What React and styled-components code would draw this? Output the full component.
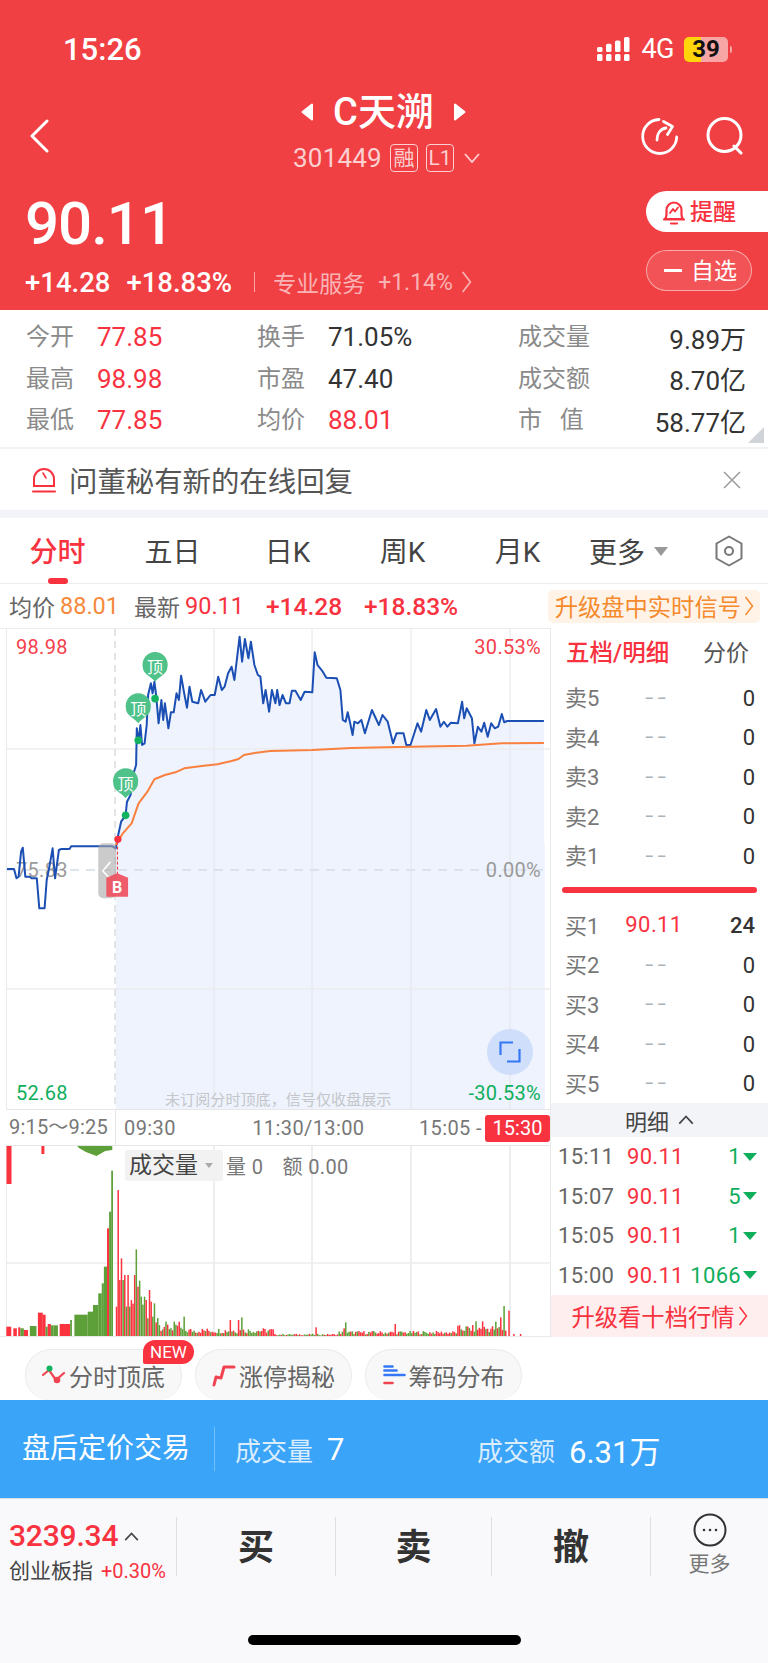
import React from 'react';
import styled, { createGlobalStyle } from 'styled-components';

const RED = '#f8323f';
const GREEN = '#0fae5c';
const FONT = `Roboto, "Noto Sans CJK SC", sans-serif`;

const GlobalStyle = createGlobalStyle`
  html, body {
    margin: 0;
    padding: 0;
    background: #fff;
  }
  body {
    font-family: ${FONT};
  }
`;

const Page = styled.div`
  width: 768px;
  height: 1663px;
  overflow: hidden;
  background: #fff;
  display: flex;
  flex-direction: column;
`;

/* header */
const Header = styled.header`
  height: 310px;
  flex: none;
  background: #f14043;
  color: #fff;
`;

const StatusBar = styled.div`
  height: 82px;
  padding: 8px 40px 0 63px;
  display: flex;
  align-items: center;
  justify-content: space-between;
`;

const Clock = styled.span`
  font-size: 31px;
  font-weight: 500;
`;

const StatusRight = styled.div`
  display: flex;
  align-items: center;
`;

const Network = styled.span`
  font-size: 27px;
  margin: 0 10px 0 11px;
  letter-spacing: -0.5px;
`;

const Battery = styled.div`
  width: 44px;
  height: 25px;
  border-radius: 5px;
  background: linear-gradient(90deg, #ffd60a 0 39%, #f8a5a6 39% 100%);
  color: #111;
  font-size: 24px;
  font-weight: 700;
  line-height: 25px;
  text-align: center;
  position: relative;
  &:after {
    content: '';
    position: absolute;
    right: -4px;
    top: 9px;
    width: 2px;
    height: 7px;
    border-radius: 0 2px 2px 0;
    background: #f8a5a6;
  }
`;

const NavRow = styled.div`
  height: 92px;
  padding: 0 24px 0 29px;
  display: grid;
  grid-template-columns: 1fr auto 1fr;
  align-items: center;
`;

const NavIcons = styled.div`
  display: flex;
  justify-content: flex-end;
  gap: 27px;
`;

const TitleStack = styled.div`
  display: flex;
  flex-direction: column;
  align-items: center;
`;

const TitleLine = styled.div`
  height: 44px;
  display: flex;
  align-items: center;
  gap: 19px;
  padding-right: 6px;
`;

const Title = styled.span`
  font-size: 38px;
  line-height: 44px;
  font-weight: 500;
`;

const CodeLine = styled.div`
  height: 48px;
  display: flex;
  align-items: center;
  color: #fbd0d1;
`;

const Code = styled.span`
  font-size: 26px;
  letter-spacing: 0.2px;
  margin-right: 8px;
`;

const Tag = styled.span`
  height: 28px;
  min-width: 28px;
  box-sizing: border-box;
  border: 1px solid #fbd0d1;
  border-radius: 4px;
  font-size: 21px;
  line-height: 26px;
  text-align: center;
  margin-right: 8px;
  padding: 0 1px;
`;

const QuoteRow = styled.div`
  height: 128px;
  display: flex;
  justify-content: space-between;
`;

const QuoteLeft = styled.div`
  padding: 10px 0 0 25px;
`;

const Price = styled.div`
  font-size: 60px;
  line-height: 64px;
  font-weight: 500;
  letter-spacing: -1px;
`;

const ChangeRow = styled.div`
  margin-top: 8px;
  height: 36px;
  display: flex;
  align-items: center;
`;

const Change = styled.span`
  font-size: 27.5px;
  font-weight: 500;
  margin-right: ${p => p.$gap || 0}px;
`;

const Service = styled.span`
  border-left: 1px solid #f9a6a8;
  margin-left: 22px;
  padding-left: 18px;
  height: 20px;
  display: flex;
  align-items: center;
  font-size: 23px;
  color: #f9b3b5;
  gap: 13px;
`;

const ServiceArrow = styled.span`
  margin-left: 8px;
  display: flex;
`;

const QuoteRight = styled.div`
  padding-top: 9px;
  width: 122px;
`;

const RemindButton = styled.div`
  height: 41px;
  box-sizing: border-box;
  background: #fff;
  border-radius: 21px 0 0 21px;
  color: ${RED};
  font-size: 23px;
  font-weight: 500;
  display: flex;
  align-items: center;
  padding: 0 0 3px 16px;
  gap: 4px;
`;

const WatchButton = styled.div`
  margin-top: 18px;
  width: 106px;
  height: 41px;
  box-sizing: border-box;
  border: 1px solid rgba(255, 255, 255, 0.5);
  border-radius: 21px;
  background: rgba(255, 255, 255, 0.1);
  font-size: 23px;
  display: flex;
  align-items: center;
  padding: 0 0 3px 17px;
  gap: 9px;
  &:before {
    content: '';
    width: 18px;
    height: 3px;
    margin-top: 3px;
    background: #fff;
  }
`;

/* stats */
const Stats = styled.section`
  height: 137px;
  flex: none;
  box-sizing: border-box;
  padding: 6px 22px 0 26px;
  display: grid;
  grid-template-columns: 231px 261px 1fr;
  grid-auto-rows: 41.5px;
  position: relative;
  &:after {
    content: '';
    position: absolute;
    right: 4px;
    bottom: 4px;
    border-style: solid;
    border-width: 0 0 16px 16px;
    border-color: transparent transparent #d0d3d8 transparent;
  }
`;

const StatCell = styled.div`
  display: flex;
  align-items: center;
  justify-content: ${p => (p.$wide ? 'space-between' : 'flex-start')};
`;

const StatLabel = styled.span`
  font-size: 24px;
  color: #8a8a8a;
  width: ${p => (p.$wide ? 'auto' : '71px')};
  padding-bottom: 4px;
  white-space: pre;
`;

const StatValue = styled.span`
  font-size: 26px;
  padding-top: 1px;
  color: ${p => (p.$red ? RED : '#333')};
`;

const Banner = styled.div`
  height: 61px;
  flex: none;
  box-sizing: content-box;
  border-top: 2px solid #f1f2f4;
  padding: 0 27px 3px 32px;
  margin-bottom: -3px;
  display: flex;
  align-items: center;
  color: #555;
  font-size: 28.4px;
  gap: 13px;
`;

const BannerClose = styled.span`
  margin-left: auto;
  display: flex;
`;

const Gap = styled.div`
  height: 8px;
  flex: none;
  background: #f3f4f7;
`;

/* tabs */
const Tabs = styled.nav`
  height: 66px;
  flex: none;
  border-bottom: 1px solid #ececec;
  box-sizing: border-box;
  display: grid;
  grid-template-columns: repeat(6, 115px) 1fr;
  align-items: center;
`;

const Tab = styled.div`
  height: 66px;
  line-height: 69px;
  text-align: center;
  font-size: 28px;
  color: ${p => (p.$active ? RED : '#444')};
  font-weight: ${p => (p.$active ? 500 : 400)};
  position: relative;
  &:after {
    content: '';
    display: ${p => (p.$active ? 'block' : 'none')};
    position: absolute;
    left: 48px;
    bottom: 0;
    width: 20px;
    height: 6px;
    border-radius: 3px;
    background: ${RED};
  }
`;

const MoreTab = styled.div`
  font-size: 28px;
  color: #444;
  display: flex;
  align-items: center;
  gap: 9px;
  padding-left: 14px;
  &:after {
    content: '';
    border-style: solid;
    border-width: 9px 7px 0 7px;
    border-color: #999 transparent transparent transparent;
  }
`;

const SettingTab = styled.div`
  display: flex;
  justify-content: center;
`;

const InfoRow = styled.div`
  height: 44px;
  flex: none;
  padding: 0 8px 0 9px;
  display: flex;
  align-items: center;
  font-size: 23px;
  box-sizing: border-box;
`;

const InfoPair = styled.span`
  width: ${p => p.$w}px;
  flex: none;
  display: flex;
  align-items: center;
  gap: 5px;
  white-space: nowrap;
  color: #666;
`;

const InfoNum = styled.span`
  color: ${p => p.$color};
  font-size: ${p => (p.$bold ? 24.5 : 23.5)}px;
  font-weight: ${p => (p.$bold ? 500 : 400)};
`;

const UpgradePill = styled.span`
  margin-left: auto;
  height: 33px;
  padding: 0 6px 0 7px;
  font-size: 23.3px;
  color: #f58a2d;
  background: #fff3e8;
  border-radius: 5px;
  white-space: nowrap;
  display: flex;
  align-items: center;
  gap: 3px;
`;

/* chart area */
const Market = styled.section`
  height: 709px;
  flex: none;
  display: flex;
`;

const ChartColumn = styled.div`
  width: 551px;
  flex: none;
  box-sizing: border-box;
  padding-left: 6px;
  border-right: 1px solid #e8e9ec;
  border-bottom: 1px solid #e8e9ec;
  border-top: 1px solid #ececec;
`;

const PriceChart = styled.div`
  height: 480px;
  position: relative;
  svg {
    display: block;
  }
`;

const ChartLabel = styled.span`
  position: absolute;
  font-size: 20px;
  line-height: 24px;
  color: ${p => p.$color};
  ${p => (p.$right ? 'right: 9px;' : 'left: 10px;')}
  top: ${p => p.$top}px;
  letter-spacing: 0.3px;
`;

const Hint = styled.span`
  position: absolute;
  left: 159px;
  top: 461px;
  font-size: 15.1px;
  line-height: 20px;
  color: #c4c6ca;
  white-space: nowrap;
`;

const FullscreenButton = styled.div`
  position: absolute;
  left: 481px;
  top: 400px;
  width: 46px;
  height: 46px;
  border-radius: 50%;
  background: #cfdefa;
  display: flex;
  align-items: center;
  justify-content: center;
`;

const AxisRow = styled.div`
  height: 37px;
  box-sizing: border-box;
  border-top: 1px solid #e6e6e6;
  border-bottom: 1px solid #e6e6e6;
  display: grid;
  grid-template-columns: 110px 1fr 68px;
  align-items: center;
  font-size: 20px;
  color: #777;
`;

const AxisFirst = styled.span`
  padding-left: 3px;
  border-right: 1px solid #e6e6e6;
  line-height: 35px;
  letter-spacing: 0.2px;
  white-space: nowrap;
`;

const AxisMid = styled.span`
  display: flex;
  justify-content: space-between;
  padding: 0 0 0 8px;
  white-space: nowrap;
  letter-spacing: 0.4px;
`;

const AxisNoon = styled.span`
  margin-left: 22px;
`;

const AxisEnd = styled.span`
  justify-self: end;
  width: 65px;
  height: 27px;
  line-height: 27px;
  margin-top: 2px;
  text-align: center;
  color: #fff;
  background: ${RED};
  border-radius: 3px;
`;

const VolumeChart = styled.div`
  height: 190px;
  position: relative;
  svg {
    display: block;
  }
`;

const VolumeLegend = styled.div`
  position: absolute;
  left: 119px;
  top: 4px;
  display: flex;
  align-items: center;
  font-size: 20px;
  color: #777;
`;

const LegendPill = styled.span`
  width: 98px;
  height: 31px;
  box-sizing: border-box;
  background: #f2f2f3;
  border-radius: 3px;
  color: #444;
  font-size: 23px;
  line-height: 31px;
  padding-left: 4px;
  display: flex;
  align-items: center;
  gap: 7px;
  margin-right: 3px;
  &:after {
    content: '';
    border-style: solid;
    border-width: 5px 4px 0 4px;
    border-color: #aaa transparent transparent transparent;
  }
`;

const LegendText = styled.span`
  margin-right: ${p => p.$gap || 0}px;
  letter-spacing: 0.4px;
`;

/* order book */
const Book = styled.aside`
  flex: 1;
  min-width: 0;
  display: flex;
  flex-direction: column;
`;

const BookTitle = styled.div`
  height: 50px;
  flex: none;
  box-sizing: border-box;
  padding: 0 19px 4px 15px;
  display: flex;
  align-items: center;
  justify-content: space-between;
  font-size: 23px;
  color: #555;
`;

const BookTitleActive = styled.span`
  color: ${RED};
  font-size: 23.5px;
  font-weight: 500;
`;

const OrderRow = styled.div`
  height: 39.5px;
  padding: 0 13px 0 14px;
  display: grid;
  grid-template-columns: 50px 78px 1fr;
  align-items: center;
  font-size: 22px;
`;

const OrderLabel = styled.span`
  color: #777;
  white-space: nowrap;
  padding-bottom: 3px;
`;

const OrderPrice = styled.span`
  text-align: center;
  line-height: 30px;
  padding-left: ${p => (p.$empty ? 7 : 0)}px;
  color: ${p => (p.$empty ? '#a9b1b9' : RED)};
  font-size: ${p => (p.$empty ? 30 : 22)}px;
  font-weight: ${p => (p.$empty ? 300 : 400)};
  letter-spacing: ${p => (p.$empty ? '4px' : '0.4px')};
`;

const OrderQty = styled.span`
  text-align: right;
  color: #333;
  padding-top: 1px;
  font-weight: ${p => (p.$bold ? 500 : 400)};
`;

const BookDivider = styled.div`
  height: 6px;
  margin: 11px 11px 13px 11px;
  flex: none;
  border-radius: 3px;
  background: ${RED};
`;

const DetailBar = styled.div`
  height: 33.5px;
  flex: none;
  background: #f3f4f8;
  display: flex;
  align-items: center;
  justify-content: center;
  gap: 9px;
  font-size: 22px;
  color: #444;
`;

const TradeRow = styled.div`
  height: 39.5px;
  padding: 1px 11px 0 7px;
  box-sizing: border-box;
  display: grid;
  grid-template-columns: 69px 60px 1fr;
  align-items: center;
  font-size: 22px;
  letter-spacing: 0.3px;
`;

const TradeTime = styled.span`
  color: #666;
`;

const TradePrice = styled.span`
  color: ${RED};
`;

const TradeQty = styled.span`
  color: ${GREEN};
  display: flex;
  align-items: center;
  justify-content: flex-end;
  gap: 2px;
  &:after {
    content: '';
    border-style: solid;
    border-width: 8px 7px 0 7px;
    border-color: ${GREEN} transparent transparent transparent;
  }
`;

const UpgradeBar = styled.div`
  height: 42px;
  flex: none;
  background: #feeeee;
  color: ${RED};
  font-size: 23.3px;
  display: flex;
  align-items: center;
  justify-content: center;
  gap: 3px;
`;

/* chips */
const Chips = styled.div`
  height: 63px;
  flex: none;
  box-sizing: border-box;
  padding: 12px 0 0 25px;
  display: flex;
  gap: 13px;
`;

const Chip = styled.div`
  width: 157px;
  height: 51px;
  box-sizing: border-box;
  border: 1px solid #ebebeb;
  border-bottom: none;
  background: #f8f8f8;
  border-radius: 26px 26px 24px 24px;
  display: flex;
  align-items: center;
  justify-content: center;
  gap: 3px;
  font-size: 24px;
  color: #666;
  position: relative;
`;

const NewBadge = styled.span`
  position: absolute;
  left: 117px;
  top: -10px;
  width: 51px;
  height: 24px;
  border-radius: 12px 12px 12px 2px;
  background: ${RED};
  color: #fff;
  font-size: 17px;
  line-height: 24px;
  text-align: center;
`;

/* after hours */
const AfterHours = styled.div`
  height: 98px;
  flex: none;
  background: #3aa4f8;
  color: #fff;
  display: flex;
  align-items: center;
  padding-left: 22px;
`;

const AfterTitle = styled.span`
  font-size: 28px;
  width: 192px;
  height: 44px;
  line-height: 44px;
  border-right: 1px solid rgba(255, 255, 255, 0.3);
  flex: none;
`;

const AfterStat = styled.span`
  width: ${p => p.$w}px;
  flex: none;
  display: flex;
  align-items: center;
  gap: 14px;
  margin-left: ${p => p.$ml || 0}px;
  font-size: 26px;
  color: rgba(255, 255, 255, 0.82);
`;

const AfterValue = styled.span`
  font-size: 31px;
  color: #fff;
`;

/* trade bar */
const BottomBar = styled.div`
  flex: 1;
  background: #f9f9fb;
  border-top: 1px solid #d8dfe6;
  box-sizing: border-box;
  padding-top: 18px;
`;

const ActionRow = styled.div`
  height: 59px;
  display: grid;
  grid-template-columns: 176px 159px 156px 159px 1fr;
  grid-template-rows: 59px;
`;

const Ticker = styled.div`
  padding-left: 9px;
  display: flex;
  flex-direction: column;
`;

const TickerPrice = styled.div`
  font-size: 30px;
  line-height: 38px;
  font-weight: 500;
  color: ${RED};
  display: flex;
  align-items: center;
  gap: 6px;
  white-space: nowrap;
  letter-spacing: -0.2px;
`;

const TickerName = styled.div`
  font-size: 21px;
  line-height: 32px;
  color: #444;
  white-space: nowrap;
  display: flex;
  gap: 8px;
`;

const TickerChange = styled.span`
  color: ${RED};
  font-size: 20px;
`;

const Action = styled.div`
  border-left: 1px solid #dfdfe2;
  box-sizing: border-box;
  padding-bottom: 6px;
  font-size: 36px;
  font-weight: 700;
  color: #333;
  display: flex;
  align-items: center;
  justify-content: center;
`;

const MoreAction = styled(Action)`
  flex-direction: column;
  padding-bottom: 2px;
  font-size: 21px;
  font-weight: 400;
  color: #777;
  gap: 3px;
  line-height: 28px;
`;

const HomeIndicator = styled.div`
  width: 273px;
  height: 10px;
  margin: 59px 0 0 248px;
  border-radius: 5px;
  background: #000;
`;

/* drawing data, in zoomed picture coordinates */
const px = x => x / 2.85 - 6;
const py = y => y / 3 - 4;

const BLUE_LINE = [[20,732],[40,732],[47,760],[53,755],[60,680],[65,668],[72,755],[85,755],[90,760],[105,760],[112,850],[127,850],[133,765],[140,730],[150,670],[157,760],[168,675],[175,672],[198,672],[203,664],[320,664],[330,670],[335,640],[345,590],[352,580],[358,570],[362,530],[372,510],[382,440],[388,420],[390,310],[395,350],[400,300],[405,360],[412,355],[418,300],[422,210],[430,175],[435,205],[440,170],[445,210],[452,295],[460,225],[465,285],[470,235],[480,310],[487,262],[495,262],[503,205],[510,225],[516,152],[525,205],[533,248],[540,185],[548,230],[565,235],[573,195],[585,230],[600,210],[612,210],[622,155],[632,195],[640,185],[650,145],[660,125],[668,165],[683,35],[690,110],[698,42],[708,100],[715,50],[725,120],[735,150],[742,155],[750,235],[757,195],[767,260],[775,195],[785,235],[790,195],[797,240],[805,210],[815,235],[825,235],[832,197],[842,197],[857,225],[868,200],[890,202],[897,82],[905,120],[920,140],[930,158],[960,160],[970,195],[977,285],[985,290],[991,262],[998,295],[1005,330],[1010,290],[1020,295],[1030,285],[1040,325],[1060,255],[1080,300],[1090,270],[1105,290],[1120,355],[1130,325],[1150,325],[1158,360],[1170,360],[1190,295],[1200,320],[1215,255],[1225,285],[1243,252],[1255,305],[1265,290],[1275,305],[1285,293],[1305,295],[1317,230],[1323,280],[1330,250],[1345,280],[1352,355],[1362,305],[1372,320],[1380,293],[1390,335],[1400,295],[1410,310],[1420,305],[1430,267],[1437,292],[1445,288],[1550,288]];

const ORANGE_LINE = [[330,660],[350,625],[375,595],[395,535],[420,500],[440,463],[470,450],[500,442],[525,430],[575,423],[620,418],[660,408],[680,402],[695,390],[730,383],[770,378],[890,375],[1000,369],[1170,365],[1330,362],[1430,355],[1550,354]];

const toPoints = list => list.map(([x, y]) => `${px(x).toFixed(1)},${py(y).toFixed(1)}`).join(' ');
const FILL_LINE = BLUE_LINE.filter(([x]) => x >= 330);
const FILL_POINTS = `${toPoints(FILL_LINE)} ${px(1553)},480 ${px(330)},480`;

const PINS = [
  { cx: 442, cy: 127, dot: 221 },
  { cx: 394, cy: 251, dot: 346 },
  { cx: 358, cy: 476, dot: 571 },
];

const GRID_X = [214, 312, 411, 510].map(x => x - 6);

const noise = i => {
  const v = Math.sin(i * 12.9898) * 43758.5453;
  return v - Math.floor(v);
};

const envelope = x => {
  if (x < 450) return 90;
  if (x < 530) return 46 - (x - 450) * 0.3;
  if (x < 780) return 22;
  if (x < 960) return 6;
  if (x < 1300) return 14;
  if (x < 1440) return 30;
  return 0;
};

const PEAKS = {
  330: [500, 'r'], 334: [150, 'r'], 339: [420, 'r'], 344: [355, 'r'], 349: [420, 'g'], 354: [405, 'r'], 358: [500, 'g'],
  363: [405, 'r'], 368: [500, 'g'], 373: [480, 'r'], 380: [405, 'r'], 385: [328, 'g'], 390: [440, 'r'], 394: [422, 'g'],
  400: [470, 'g'], 408: [470, 'g'], 415: [480, 'r'], 422: [450, 'r'], 428: [485, 'r'], 434: [530, 'g'], 440: [490, 'g'],
  495: [545, 'g'], 510: [545, 'r'], 522: [530, 'g'], 655: [540, 'r'], 685: [532, 'g'], 680: [540, 'r'], 897: [562, 'r'],
  985: [547, 'g'], 980: [565, 'r'], 1125: [552, 'r'], 1355: [544, 'g'], 1372: [544, 'r'], 1410: [545, 'g'], 1425: [532, 'r'],
  1433: [498, 'g'], 1447: [512, 'r'], 1465: [582, 'r'], 1480: [582, 'r'],
};

const PRE_BARS = [
  [18, 32, 560, 'r'], [38, 48, 565, 'r'], [52, 58, 562, 'r'], [58, 68, 565, 'g'], [68, 80, 570, 'r'], [85, 104, 558, 'g'], [108, 122, 518, 'r'], [122, 130, 524, 'r'],
  [130, 136, 560, 'g'], [136, 145, 552, 'r'], [145, 152, 556, 'g'], [152, 165, 556, 'g'], [170, 200, 552, 'r'], [200, 205, 540, 'g'],
  [212, 250, 524, 'g'], [250, 265, 515, 'g'], [265, 280, 495, 'g'], [280, 290, 460, 'g'], [290, 296, 430, 'g'], [296, 305, 380, 'g'], [305, 311, 265, 'r'], [311, 317, 215, 'g'], [317, 322, 92, 'g'],
];

const vy = y => y / 3 - 6;

const INTRADAY_BARS = (() => {
  const bars = [];
  for (let x = 330, i = 0; x < 1485; x += 4.7, i += 1) {
    const key = Object.keys(PEAKS).find(k => Math.abs(Number(k) - x) < 2.4);
    if (key) {
      bars.push([x, PEAKS[key][0], PEAKS[key][1]]);
    } else {
      const h = envelope(x) * (0.35 + noise(i) * 0.75);
      bars.push([x, 588 - h, noise(i + 500) > 0.5 ? 'r' : 'g']);
    }
  }
  return bars;
})();

const barColor = c => (c === 'r' ? '#fb333f' : '#5d9f38');

const VolumeBars = () => (
  <svg width="544" height="190">
    {GRID_X.map(x => (
      <line key={x} x1={x} x2={x} y1="0" y2="190" stroke="#e8e8e8" strokeWidth="1.5" />
    ))}
    <line x1="0" x2="544" y1="117" y2="117" stroke="#ececec" strokeWidth="1.5" />
    <line x1="0" x2="0" y1="0" y2="190" stroke="#e4e4e4" strokeWidth="1.5" />
    <rect x="0.5" y="0" width="5" height={vy(132)} fill="#fb333f" />
    <polygon points={`${px(220)},0 ${px(320)},0 ${px(320)},4 ${px(300)},5 ${px(275)},10 ${px(245)},6 ${px(225)},2`} fill="#5d9f38" />
    <rect x={px(118)} y="0" width="3" height="8" fill="#fb333f" />
    {PRE_BARS.map(([a, b, y, c]) => (
      <rect key={a} x={px(a)} y={vy(y)} width={(b - a) / 2.85} height={190 - vy(y)} fill={barColor(c)} />
    ))}
    <line x1={px(326)} x2={px(326)} y1="0" y2="190" stroke="#fff" strokeWidth="2" strokeDasharray="7 4" />
    {INTRADAY_BARS.map(([x, y, c], i) => (
      <rect key={i} x={px(x)} y={vy(y)} width="1.5" height={190 - vy(y)} fill={barColor(c)} />
    ))}
  </svg>
);

const PriceDrawing = () => (
  <svg width="544" height="480">
    <polygon points={FILL_POINTS} fill="#eef3fd" />
    <rect x={px(330)} y={py(660)} width={px(1553) - px(330)} height={480 - py(660)} fill="#eef3fd" />
    {GRID_X.map(x => (
      <line key={x} x1={x} x2={x} y1="0" y2="480" stroke="#e3e6ea" strokeWidth="1" />
    ))}
    <line x1="0" x2="0" y1="0" y2="480" stroke="#e4e4e4" strokeWidth="1.5" />
    <line x1="0" x2="544" y1="120" y2="120" stroke="#ececec" strokeWidth="1.5" />
    <line x1="0" x2="544" y1="360" y2="360" stroke="#ececec" strokeWidth="1.5" />
    <line x1={px(328)} x2={px(328)} y1="0" y2="480" stroke="#dcdcdc" strokeWidth="1.5" strokeDasharray="7 5" />
    <line x1="0" x2="544" y1="241" y2="241" stroke="#d3dde6" strokeWidth="1.5" strokeDasharray="9 7" />
    <text x="10" y="248" fontSize="20" fill="#9a9a9a" letterSpacing="0.3" fontFamily="Roboto, sans-serif">75.83</text>
    <polyline points={toPoints(BLUE_LINE)} fill="none" stroke="#1b4fb4" strokeWidth="2" strokeLinejoin="round" />
    <polyline points={toPoints(ORANGE_LINE)} fill="none" stroke="#f9803f" strokeWidth="2" strokeLinejoin="round" />
    <line x1={px(335)} x2={px(335)} y1={py(650)} y2={py(750)} stroke={RED} strokeWidth="1" strokeDasharray="3 2" />
    <rect x={px(280)} y={py(655)} width="18" height="55" rx="5" fill="#a8a8a8" fillOpacity="0.6" />
    <polyline points={`${px(315)},${py(710)} ${px(293)},${py(738)} ${px(315)},${py(762)}`} fill="none" stroke="#fff" strokeWidth="1.6" />
    <polygon points={`${px(303)},${py(758)} ${px(334)},${py(745)} ${px(365)},${py(758)} ${px(365)},${py(815)} ${px(303)},${py(815)}`} fill="#ef4f5e" fillOpacity="0.92" />
    <text x={px(334)} y={py(804)} fontSize="16" fontWeight="700" fill="#fff" textAnchor="middle" fontFamily="Roboto, sans-serif">B</text>
    <circle cx={px(336)} cy={py(643)} r="3.6" fill={RED} />
    {PINS.map(({ cx, cy, dot }) => (
      <g key={cx}>
        <path d={`M${px(cx) - 12.3} ${py(cy)}a12.6 12.6 0 1 1 24.6 0c0 6.5-8 9-12.3 14.5c-4.3-5.5-12.3-8-12.3-14.5z`} fill="#4fc28a" />
        <text x={px(cx)} y={py(cy) + 6} fontSize="16" fill="#fff" textAnchor="middle" fontFamily={FONT}>顶</text>
        <circle cx={px(cx)} cy={py(dot)} r="3.8" fill="#12b35f" />
      </g>
    ))}
  </svg>
);

const ChevronLeft = () => (
  <svg width="20" height="34" viewBox="0 0 20 34">
    <polyline points="18,2 3,17 18,32" fill="none" stroke="#fff" strokeWidth="3" strokeLinecap="round" strokeLinejoin="round" />
  </svg>
);

const Arrowhead = ({ flip }) => (
  <svg width="13" height="18" viewBox="0 0 13 18" style={flip ? { transform: 'scaleX(-1)' } : undefined}>
    <path d="M11 1.5v15L1.5 9z" fill="#fff" stroke="#fff" strokeWidth="2" strokeLinejoin="round" />
  </svg>
);

const RefreshIcon = () => (
  <svg width="38" height="38" viewBox="0 0 38 38" fill="none" stroke="#fff" strokeWidth="2.8" strokeLinecap="round" strokeLinejoin="round">
    <path d="M18 2.5A17 17 0 1 0 35.7 20" />
    <path d="M16 23c0-6 3-11 9-12" />
    <path d="M22.5 4.5l9 5-5 8" />
  </svg>
);

const SearchIcon = () => (
  <svg width="38" height="38" viewBox="0 0 38 38" fill="none" stroke="#fff" strokeWidth="3" strokeLinecap="round">
    <circle cx="18.5" cy="18" r="16.5" />
    <path d="M28 29l7 7" />
  </svg>
);

const SmallChevronDown = () => (
  <svg width="16" height="10" viewBox="0 0 16 10" style={{ marginLeft: 2 }}>
    <polyline points="1,1 8,9 15,1" fill="none" stroke="#fbd0d1" strokeWidth="1.8" />
  </svg>
);

const ChevronRight = ({ color = '#f9b3b5', h = 22 }) => (
  <svg width={h / 2} height={h} viewBox="0 0 10 20" style={{ flex: 'none' }}>
    <polyline points="1.5,1 8.5,10 1.5,19" fill="none" stroke={color} strokeWidth="1.5" />
  </svg>
);

const BellIcon = () => (
  <svg width="24" height="28" viewBox="0 0 24 28" fill="none" stroke={RED} strokeWidth="2.2" strokeLinejoin="round" strokeLinecap="round" style={{ marginTop: 3 }}>
    <path d="M3 21c2-2 1.5-5 1.5-9a7.5 7.5 0 0 1 15 0c0 4-.5 7 1.5 9z" />
    <path d="M2 21.5h20M9 25.5h6" />
    <path d="M8 15l3-4 2 2.5 3-4" strokeWidth="1.8" />
  </svg>
);

const AlarmIcon = () => (
  <svg width="24" height="28" viewBox="0 0 24 28" fill="none" stroke={RED} strokeWidth="2" strokeLinecap="round">
    <path d="M2 20v-7a10 10 0 0 1 20 0v7z" />
    <path d="M1 25.5h22" />
    <path d="M11 7l3 5" strokeWidth="1.6" />
  </svg>
);

const CloseIcon = () => (
  <svg width="18" height="18" viewBox="0 0 18 18" stroke="#999" strokeWidth="1.5">
    <path d="M1 1l16 16M17 1L1 17" />
  </svg>
);

const HexIcon = () => (
  <svg width="28" height="32" viewBox="0 0 28 32" fill="none" stroke="#777" strokeWidth="2">
    <path d="M14 1.5l12.5 7v15L14 30.5 1.5 23.5v-15z" strokeLinejoin="round" />
    <circle cx="14" cy="16" r="4" />
  </svg>
);

const FullscreenIcon = () => (
  <svg width="22" height="22" viewBox="0 0 22 22" fill="none" stroke="#3578f6" strokeWidth="2.2">
    <path d="M1.5 14V1.5H14" />
    <path d="M20.5 8v12.5H8" />
  </svg>
);

const CaretUp = ({ color = '#444', w = 16 }) => (
  <svg width={w} height={w * 0.6} viewBox="0 0 16 10">
    <polyline points="1,9 8,1.5 15,9" fill="none" stroke={color} strokeWidth="1.8" />
  </svg>
);

const SignalIcon = () => (
  <svg width="33" height="24" viewBox="0 0 33 24" fill="#fff">
    {[0, 9, 18, 27].map((x, i) => (
      <g key={x}>
        <rect x={x} y="17" width="5.5" height="7" rx="1.5" />
        <rect x={x} y={10 - i * 3.3} width="5.5" height={5 + i * 3.3} rx="1.5" />
      </g>
    ))}
  </svg>
);

const TrendChipIcon = () => (
  <svg width="24" height="20" viewBox="0 0 24 20" fill="none" stroke="#f04452" strokeWidth="2.2" strokeLinecap="round">
    <path d="M1 10l6-5 7 10 8-7" />
    <circle cx="7.5" cy="3.5" r="3" fill="#12b35f" stroke="none" />
    <circle cx="15" cy="15" r="3.3" fill="#f04452" stroke="none" />
  </svg>
);

const LimitChipIcon = () => (
  <svg width="24" height="24" viewBox="0 0 24 24" fill="none" stroke="#f04452" strokeWidth="3" strokeLinecap="round" strokeLinejoin="round">
    <path d="M2 22l2-8 5 1 3-11h10" />
  </svg>
);

const ChipsChipIcon = () => (
  <svg width="23" height="22" viewBox="0 0 23 22" strokeWidth="2.6" strokeLinecap="round">
    <path d="M1.5 2.5h8M1.5 11h20" stroke="#3578f6" />
    <path d="M1.5 6.5h12" stroke="#3578f6" />
    <path d="M1.5 19h8" stroke="#f04452" />
  </svg>
);

const MoreIcon = () => (
  <svg width="34" height="34" viewBox="0 0 34 34" fill="none" stroke="#333" strokeWidth="2" style={{ flex: 'none' }}>
    <circle cx="17" cy="17" r="15.5" />
    <circle cx="11" cy="17" r="1.3" fill="#333" stroke="none" />
    <circle cx="17" cy="17" r="1.3" fill="#333" stroke="none" />
    <circle cx="23" cy="17" r="1.3" fill="#333" stroke="none" />
  </svg>
);

const STATS = [
  ['今开', '77.85', true, '换手', '71.05%', false, '成交量', '9.89万'],
  ['最高', '98.98', true, '市盈', '47.40', false, '成交额', '8.70亿'],
  ['最低', '77.85', true, '均价', '88.01', true, '市   值', '58.77亿'],
];

const TABS = ['分时', '五日', '日K', '周K', '月K'];
const SELLS = [5, 4, 3, 2, 1];
const BUYS = [[1, '90.11', '24'], [2, '--', '0'], [3, '--', '0'], [4, '--', '0'], [5, '--', '0']];
const TRADES = [['15:11', '1'], ['15:07', '5'], ['15:05', '1'], ['15:00', '1066']];

export default function App() {
  return (
    <Page>
      <GlobalStyle />
      <Header>
        <StatusBar>
          <Clock>15:26</Clock>
          <StatusRight>
            <SignalIcon />
            <Network>4G</Network>
            <Battery>39</Battery>
          </StatusRight>
        </StatusBar>
        <NavRow>
          <ChevronLeft />
          <TitleStack>
            <TitleLine>
              <Arrowhead />
              <Title>C天溯</Title>
              <Arrowhead flip />
            </TitleLine>
            <CodeLine>
              <Code>301449</Code>
              <Tag>融</Tag>
              <Tag>L1</Tag>
              <SmallChevronDown />
            </CodeLine>
          </TitleStack>
          <NavIcons>
            <RefreshIcon />
            <SearchIcon />
          </NavIcons>
        </NavRow>
        <QuoteRow>
          <QuoteLeft>
            <Price>90.11</Price>
            <ChangeRow>
              <Change $gap={16}>+14.28</Change>
              <Change>+18.83%</Change>
              <Service>
                专业服务
                <span>+1.14%</span>
              </Service>
              <ServiceArrow><ChevronRight /></ServiceArrow>
            </ChangeRow>
          </QuoteLeft>
          <QuoteRight>
            <RemindButton><BellIcon />提醒</RemindButton>
            <WatchButton>自选</WatchButton>
          </QuoteRight>
        </QuoteRow>
      </Header>

      <Stats>
        {STATS.map(row => (
          <React.Fragment key={row[0]}>
            <StatCell>
              <StatLabel>{row[0]}</StatLabel>
              <StatValue $red={row[2]}>{row[1]}</StatValue>
            </StatCell>
            <StatCell>
              <StatLabel>{row[3]}</StatLabel>
              <StatValue $red={row[5]}>{row[4]}</StatValue>
            </StatCell>
            <StatCell $wide>
              <StatLabel $wide>{row[6]}</StatLabel>
              <StatValue>{row[7]}</StatValue>
            </StatCell>
          </React.Fragment>
        ))}
      </Stats>

      <Banner>
        <AlarmIcon />
        问董秘有新的在线回复
        <BannerClose><CloseIcon /></BannerClose>
      </Banner>
      <Gap />

      <Tabs>
        {TABS.map((t, i) => (
          <Tab key={t} $active={i === 0}>{t}</Tab>
        ))}
        <MoreTab>更多</MoreTab>
        <SettingTab><HexIcon /></SettingTab>
      </Tabs>

      <InfoRow>
        <InfoPair $w={125}>均价<InfoNum $color="#f58a3c">88.01</InfoNum></InfoPair>
        <InfoPair $w={132}>最新<InfoNum $color={RED}>90.11</InfoNum></InfoPair>
        <InfoPair $w={98}><InfoNum $color={RED} $bold>+14.28</InfoNum></InfoPair>
        <InfoPair $w={100}><InfoNum $color={RED} $bold>+18.83%</InfoNum></InfoPair>
        <UpgradePill>升级盘中实时信号<ChevronRight color="#f58a2d" h={20} /></UpgradePill>
      </InfoRow>

      <Market>
        <ChartColumn>
          <PriceChart>
            <PriceDrawing />
            <ChartLabel $color="#f5404c" $top={6}>98.98</ChartLabel>
            <ChartLabel $color="#f5404c" $top={6} $right>30.53%</ChartLabel>
            <ChartLabel $color="#9a9a9a" $top={229} $right>0.00%</ChartLabel>
            <ChartLabel $color={GREEN} $top={452}>52.68</ChartLabel>
            <ChartLabel $color={GREEN} $top={452} $right>-30.53%</ChartLabel>
            <Hint>未订阅分时顶底，信号仅收盘展示</Hint>
            <FullscreenButton><FullscreenIcon /></FullscreenButton>
          </PriceChart>
          <AxisRow>
            <AxisFirst>9:15～9:25</AxisFirst>
            <AxisMid>
              <span>09:30</span>
              <AxisNoon>11:30/13:00</AxisNoon>
              <span>15:05 -</span>
            </AxisMid>
            <AxisEnd>15:30</AxisEnd>
          </AxisRow>
          <VolumeChart>
            <VolumeBars />
            <VolumeLegend>
              <LegendPill>成交量</LegendPill>
              <LegendText $gap={19}>量 0</LegendText>
              <LegendText>额 0.00</LegendText>
            </VolumeLegend>
          </VolumeChart>
        </ChartColumn>

        <Book>
          <BookTitle>
            <BookTitleActive>五档/明细</BookTitleActive>
            <span>分价</span>
          </BookTitle>
          {SELLS.map(n => (
            <OrderRow key={n}>
              <OrderLabel>卖{n}</OrderLabel>
              <OrderPrice $empty>--</OrderPrice>
              <OrderQty>0</OrderQty>
            </OrderRow>
          ))}
          <BookDivider />
          {BUYS.map(([n, price, qty]) => (
            <OrderRow key={n}>
              <OrderLabel>买{n}</OrderLabel>
              <OrderPrice $empty={price === '--'}>{price}</OrderPrice>
              <OrderQty $bold={qty !== '0'}>{qty}</OrderQty>
            </OrderRow>
          ))}
          <DetailBar>明细 <CaretUp /></DetailBar>
          {TRADES.map(([time, qty]) => (
            <TradeRow key={time}>
              <TradeTime>{time}</TradeTime>
              <TradePrice>90.11</TradePrice>
              <TradeQty>{qty}</TradeQty>
            </TradeRow>
          ))}
          <UpgradeBar>升级看十档行情<ChevronRight color={RED} h={20} /></UpgradeBar>
        </Book>
      </Market>

      <Chips>
        <Chip><TrendChipIcon />分时顶底<NewBadge>NEW</NewBadge></Chip>
        <Chip><LimitChipIcon />涨停揭秘</Chip>
        <Chip><ChipsChipIcon />筹码分布</Chip>
      </Chips>

      <AfterHours>
        <AfterTitle>盘后定价交易</AfterTitle>
        <AfterStat $w={242} $ml={20}>成交量<AfterValue>7</AfterValue></AfterStat>
        <AfterStat $w={200}>成交额<AfterValue>6.31万</AfterValue></AfterStat>
      </AfterHours>

      <BottomBar>
        <ActionRow>
          <Ticker>
            <TickerPrice>3239.34<CaretUp w={15} /></TickerPrice>
            <TickerName>创业板指<TickerChange>+0.30%</TickerChange></TickerName>
          </Ticker>
          <Action>买</Action>
          <Action>卖</Action>
          <Action>撤</Action>
          <MoreAction><MoreIcon />更多</MoreAction>
        </ActionRow>
        <HomeIndicator />
      </BottomBar>
    </Page>
  );
}
